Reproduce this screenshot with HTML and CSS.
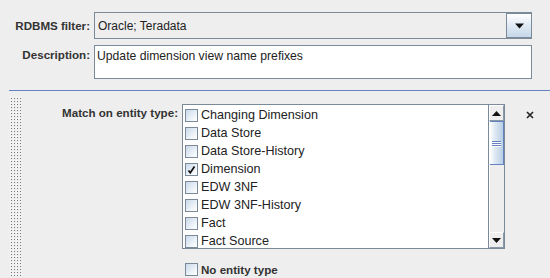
FILE: index.html
```html
<!DOCTYPE html>
<html lang="en">
<head>
    <meta charset="UTF-8">
    <title>Rule filter</title>
    <link rel="stylesheet" href="styles.css">
</head>
<body>
    <div class="filter-form">
        <label class="field-label combo-label">RDBMS filter:</label>
        <div class="combo">
            <span class="combo-text">Oracle; Teradata</span>
            <span class="combo-btn">
                <svg width="11" height="6" viewBox="0 0 11 6"><path d="M1 0.5h9L5.5 5.5z" fill="#111"/></svg>
            </span>
        </div>

        <label class="field-label desc-label">Description:</label>
        <div class="desc-box">Update dimension view name prefixes</div>
    </div>

    <div class="separator"></div>

    <div class="entity-section">
        <svg class="grip" width="11" height="180">
            <defs>
                <pattern id="bumps" width="3" height="3" patternUnits="userSpaceOnUse">
                    <rect x="0" y="0" width="1" height="1" fill="#ffffff"/>
                    <rect x="1" y="1" width="1" height="1" fill="#7c7c7c"/>
                </pattern>
            </defs>
            <rect width="11" height="180" fill="url(#bumps)"/>
        </svg>

        <div class="entity-body">
            <label class="field-label match-label">Match on entity type:</label>

            <div class="entity-list">
                <div class="list-items">
                    <div class="list-row"><span class="check"></span>Changing Dimension</div>
                    <div class="list-row"><span class="check"></span>Data Store</div>
                    <div class="list-row"><span class="check"></span>Data Store-History</div>
                    <div class="list-row"><span class="check checked">
                        <svg width="11" height="11" viewBox="0 0 11 11"><path d="M2.5 6.5l1.8 2.3L8.5 2.5" stroke="#111" stroke-width="1.7" fill="none"/></svg>
                    </span>Dimension</div>
                    <div class="list-row"><span class="check"></span>EDW 3NF</div>
                    <div class="list-row"><span class="check"></span>EDW 3NF-History</div>
                    <div class="list-row"><span class="check"></span>Fact</div>
                    <div class="list-row"><span class="check"></span>Fact Source</div>
                </div>
                <div class="scrollbar">
                    <div class="scroll-btn">
                        <svg width="9" height="5" viewBox="0 0 9 5"><path d="M0 5h9L4.5 0z" fill="#111"/></svg>
                    </div>
                    <div class="scroll-track">
                        <div class="scroll-thumb">
                            <span></span><span></span><span></span>
                        </div>
                    </div>
                    <div class="scroll-btn">
                        <svg width="9" height="5" viewBox="0 0 9 5"><path d="M0 0h9L4.5 5z" fill="#111"/></svg>
                    </div>
                </div>
            </div>

            <div class="close-btn">
                <svg width="8" height="8" viewBox="0 0 8 8"><path d="M1 1l6 6M7 1L1 7" stroke="#222" stroke-width="1.6"/></svg>
            </div>

            <div></div>
            <div class="no-type"><span class="check"></span>No entity type</div>
        </div>
    </div>
</body>
</html>
```

FILE: styles.css
```css
* {
    margin: 0;
    padding: 0;
    box-sizing: border-box;
}

body {
    background-color: #eeeeee;
    color: #222;
    font-family: 'Liberation Sans', Arial, sans-serif;
    font-size: 12px;
    width: 550px;
    height: 278px;
    overflow: hidden;
}

.field-label {
    font-weight: bold;
    font-size: 11.6px;
    color: #333;
    text-align: right;
}

.filter-form {
    display: grid;
    grid-template-columns: 90px 438px;
    column-gap: 4px;
    row-gap: 6px;
    padding-top: 12px;
}

.combo-label {
    align-self: center;
}

.combo {
    height: 27px;
    display: flex;
    align-items: center;
    border: 1px solid #7a8a99;
    background-color: #eeeeee;
    padding-left: 3px;
}

.combo-text {
    flex: 1;
}

.combo-btn {
    width: 26px;
    height: 25px;
    margin-right: -1px;
    border: 1px solid #7a8a99;
    background: linear-gradient(#ffffff, #dde8f3 55%, #c6d7e9);
    display: flex;
    align-items: center;
    justify-content: center;
}

.desc-label {
    padding-top: 3px;
}

.desc-box {
    height: 34px;
    border: 1px solid #7a8a99;
    background-color: #ffffff;
    padding: 3px 2px;
    font-size: 12.2px;
}

.separator {
    margin: 11px 0 0 9px;
    border-top: 1px solid #6382bf;
}

.entity-section {
    display: flex;
    padding-top: 6px;
}

.grip {
    margin-left: 10px;
    flex-shrink: 0;
}

.entity-body {
    display: grid;
    grid-template-columns: 157px 323px 40px;
    grid-template-rows: auto auto;
    column-gap: 4px;
    padding-top: 7px;
}

.match-label {
    padding-top: 2px;
}

.entity-list {
    height: 145px;
    display: flex;
    border: 1px solid #7a8a99;
    background-color: #ffffff;
}

.list-items {
    flex: 1;
    padding: 1px 0 0 2px;
}

.list-row {
    height: 18px;
    display: flex;
    align-items: center;
    font-size: 12.6px;
}

.check {
    width: 13px;
    height: 13px;
    border: 1px solid #7a8a99;
    background: linear-gradient(135deg, #c9d9ea, #f4f8fb 75%, #ffffff);
    margin-right: 3px;
    display: inline-flex;
    align-items: center;
    justify-content: center;
    flex-shrink: 0;
}

.scrollbar {
    width: 16px;
    display: flex;
    flex-direction: column;
    border-left: 1px solid #7a8a99;
    background-color: #eeeeee;
}

.scroll-btn {
    height: 16px;
    display: flex;
    align-items: center;
    justify-content: center;
    background-color: #eeeeee;
    border: 1px solid #ffffff;
    border-right-color: #8a99a8;
    border-bottom-color: #8a99a8;
}

.scroll-track {
    flex: 1;
    border-left: 1px solid #ffffff;
}

.scroll-thumb {
    height: 44px;
    border: 1px solid #6382bf;
    border-left: none;
    background: linear-gradient(90deg, #ffffff, #dde8f3 40%, #b8cfe5);
    display: flex;
    flex-direction: column;
    align-items: center;
    justify-content: center;
    gap: 1px;
}

.scroll-thumb span {
    width: 9px;
    height: 1px;
    background-color: #6382bf;
    box-shadow: 0 1px 0 #ffffff;
}

.close-btn {
    padding: 4px 0 0 17px;
}

.no-type {
    grid-column: 2;
    display: flex;
    align-items: center;
    padding: 9px 0 0 3px;
    font-weight: bold;
    font-size: 11.6px;
    color: #333;
}
```
